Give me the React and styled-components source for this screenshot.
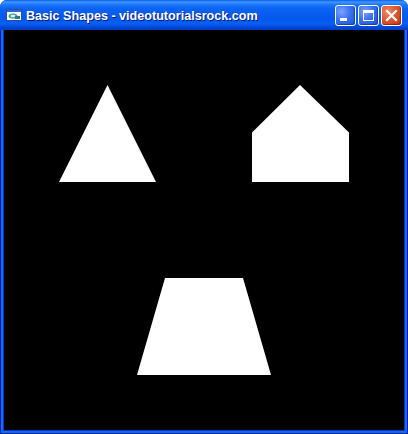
import React from "react";
import styled, { createGlobalStyle } from "styled-components";

const Global = createGlobalStyle`
  html, body { margin: 0; padding: 0; background: #ffffff; }
  #root { width: 408px; height: 434px; }
`;

const Window = styled.div`
  width: 408px;
  height: 434px;
  display: flex;
  flex-direction: column;
  background: #0831d9;
  border-radius: 7px 7px 0 0;
  overflow: hidden;
`;

const TitleBar = styled.div`
  height: 30px;
  flex: none;
  display: flex;
  align-items: center;
  padding: 0 6px 0 6px;
  box-sizing: border-box;
  background: linear-gradient(
    to bottom,
    #0a5fe8 0px,
    #3d95ff 2px,
    #1a73f8 5px,
    #0a62f2 9px,
    #0558ec 18px,
    #0560f2 24px,
    #0048da 27px,
    #003cc2 30px
  );
`;

const AppIcon = styled.svg`
  width: 16px;
  height: 16px;
  flex: none;
  margin-right: 4px;
`;

const Title = styled.div`
  flex: 1;
  color: #ffffff;
  font-family: "Liberation Sans", Arial, sans-serif;
  font-weight: bold;
  font-size: 12.6px;
  text-shadow: 1px 1px 0 #0a1883;
  white-space: nowrap;
  padding-top: 1px;
`;

const Buttons = styled.div`
  display: flex;
  gap: 2px;
  align-items: center;
  padding-top: 1px;
`;

const CapButton = styled.div`
  width: 21px;
  height: 21px;
  box-sizing: border-box;
  border: 1px solid #ffffff;
  border-radius: 3px;
  display: flex;
  align-items: center;
  justify-content: center;
  background: ${(p) =>
    p.$close
      ? "radial-gradient(circle at 30% 30%, #f08b6b 0%, #e0582f 45%, #c2330f 100%)"
      : "radial-gradient(circle at 30% 30%, #7aa4fb 0%, #3a73f0 45%, #1a52e0 100%)"};
  box-shadow: inset -1px -1px 1px rgba(0, 0, 40, 0.35);
`;

const Frame = styled.div`
  flex: 1;
  display: flex;
  padding: 0 4px 4px 4px;
  background: #0831d9;
  box-shadow: inset 1px 0 0 #001ea0, inset -1px 0 0 #001ea0, inset 0 -1px 0 #001ea0,
    inset 3px 0 0 #166aee, inset -3px 0 0 #166aee, inset 0 -3px 0 #166aee;
`;

const Canvas = styled.div`
  width: 400px;
  height: 400px;
  background: #000000;
  display: flex;
`;

const Scene = styled.svg`
  width: 400px;
  height: 400px;
  display: block;
`;

export default function App() {
  return (
    <>
      <Global />
      <Window>
        <TitleBar>
          <AppIcon viewBox="0 0 16 16">
            <rect x="0.5" y="2.5" width="15" height="11" fill="#ffffff" stroke="#2a4fa0" />
            <rect x="1" y="3" width="14" height="2" fill="#2f63d6" />
            <ellipse cx="7" cy="9" rx="4.5" ry="2.6" fill="#3aa6a0" />
            <ellipse cx="7" cy="9" rx="2.5" ry="1.3" fill="#d8f0ee" />
            <rect x="9" y="9" width="5" height="3" fill="#2a7a8a" />
          </AppIcon>
          <Title>Basic Shapes - videotutorialsrock.com</Title>
          <Buttons>
            <CapButton>
              <svg width="19" height="19" viewBox="0 0 19 19">
                <rect x="4" y="12" width="7" height="3" fill="#ffffff" />
              </svg>
            </CapButton>
            <CapButton>
              <svg width="19" height="19" viewBox="0 0 19 19">
                <rect x="4.5" y="4.5" width="10" height="10" fill="none" stroke="#ffffff" strokeWidth="1" />
                <rect x="4" y="4" width="11" height="3" fill="#ffffff" />
              </svg>
            </CapButton>
            <CapButton $close>
              <svg width="19" height="19" viewBox="0 0 19 19">
                <path d="M5 5 L14 14 M14 5 L5 14" stroke="#ffffff" strokeWidth="2.2" strokeLinecap="square" />
              </svg>
            </CapButton>
          </Buttons>
        </TitleBar>
        <Frame>
          <Canvas>
            <Scene viewBox="0 0 400 400">
              <polygon points="103.5,55 55,152 152,152" fill="#ffffff" />
              <polygon points="296,55 345,102.5 345,152 248,152 248,102.5" fill="#ffffff" />
              <polygon points="161,248 239,248 267,345 133,345" fill="#ffffff" />
            </Scene>
          </Canvas>
        </Frame>
      </Window>
    </>
  );
}
